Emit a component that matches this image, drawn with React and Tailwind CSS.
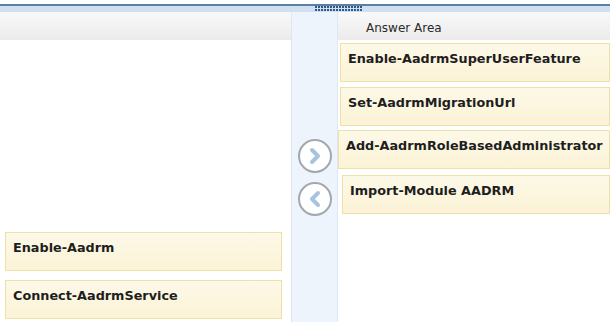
import React from 'react';

const font = { fontFamily: '"DejaVu Sans", Verdana, sans-serif' };

function Item({ label, className = '' }) {
  return (
    <div
      className={`h-[39px] overflow-hidden whitespace-nowrap border border-[#efe1a6] bg-gradient-to-b from-[#fdf9e8] to-[#fbf3d6] pl-[7px] pt-[5px] text-[12.8px] font-bold text-[#1e1e1e] ${className}`}
    >
      {label}
    </div>
  );
}

function Arrow({ dir }) {
  return (
    <div className="flex h-[34px] w-[34px] items-center justify-center rounded-full border-2 border-[#a3a8ae] bg-white">
      <svg width="16" height="18" viewBox="0 0 16 18">
        <path
          d={dir === 'right' ? 'M5 3 L11 9 L5 15' : 'M11 3 L5 9 L11 15'}
          fill="none"
          stroke="#a9c3de"
          strokeWidth="4"
          strokeLinecap="round"
          strokeLinejoin="round"
        />
      </svg>
    </div>
  );
}

export default function App() {
  return (
    <div className="h-[329px] w-[610px] overflow-hidden bg-white" style={font}>
      {/* top splitter */}
      <div className="h-[4px] bg-white" />
      <div className="h-[2px] bg-[#5f7f9e]" />
      <div className="flex h-[6px] justify-start bg-[#cfe0f2]">
        <div className="ml-[315px] mt-[0px] flex h-[5px] w-[47px] flex-col justify-between">
          <div className="h-[2px] bg-[repeating-linear-gradient(90deg,#2f5684_0px,#2f5684_2px,transparent_2px,transparent_3px)]" />
          <div className="h-[2px] bg-[repeating-linear-gradient(90deg,#2f5684_0px,#2f5684_2px,transparent_2px,transparent_3px)]" />
        </div>
      </div>

      <div className="flex h-[317px]">
        {/* left source list */}
        <div className="flex w-[291px] flex-col">
          <div className="h-[28px] bg-gradient-to-b from-[#f9f9f9] to-[#ebebeb]" />
          <div className="flex flex-1 flex-col justify-end gap-[9px] pb-[10px] pl-[5px] pr-[9px]">
            <Item label="Enable-Aadrm" className="h-[37px]" />
            <Item label="Connect-AadrmService" className="h-[38px]" />
          </div>
        </div>

        {/* middle arrows */}
        <div className="flex h-[310px] w-[47px] flex-col items-center border-x border-[#dde8f4] bg-[#eef4fc] pt-[127px]">
          <Arrow dir="right" />
          <div className="h-[9px]" />
          <Arrow dir="left" />
        </div>

        {/* answer area */}
        <div className="flex flex-1 flex-col">
          <div className="flex h-[28px] items-center bg-gradient-to-b from-[#f9f9f9] to-[#ebebeb] pl-[28px] pt-[3px] text-[12px] text-[#2a2a2a]">
            Answer Area
          </div>
          <div className="flex flex-col pt-[3px]">
            <Item label="Enable-AadrmSuperUserFeature" className="ml-[2px]" />
            <Item label="Set-AadrmMigrationUrl" className="ml-[2px] mt-[5px]" />
            <Item label="Add-AadrmRoleBasedAdministrator" className="mt-[4px]" />
            <Item label="Import-Module AADRM" className="ml-[4px] mt-[6px]" />
          </div>
        </div>
      </div>
    </div>
  );
}
